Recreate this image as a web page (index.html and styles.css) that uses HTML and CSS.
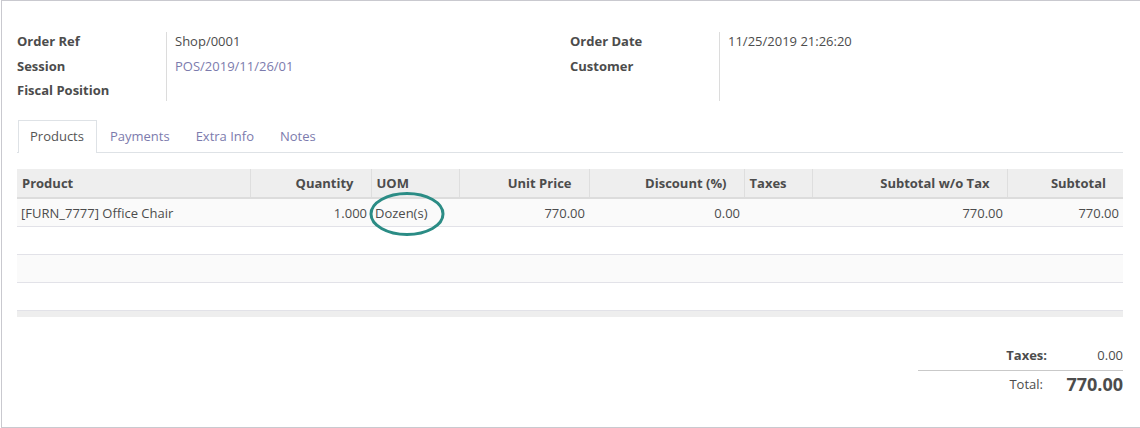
FILE: index.html
```html
<!DOCTYPE html>
<html>
<head>
<meta charset="utf-8">
<link rel="stylesheet" href="styles.css">
</head>
<body>
<div class="sheet">
  <div class="groups">
    <div class="group">
      <div class="lbl">Order Ref</div><div class="val">Shop/0001</div>
      <div class="lbl">Session</div><div class="val"><a class="link">POS/2019/11/26/01</a></div>
      <div class="lbl last">Fiscal Position</div><div class="val last"></div>
    </div>
    <div class="group">
      <div class="lbl">Order Date</div><div class="val">11/25/2019 21:26:20</div>
      <div class="lbl">Customer</div><div class="val"></div>
      <div class="lbl last">&nbsp;</div><div class="val last"></div>
    </div>
  </div>

  <ul class="tabs">
    <li class="tab active">Products</li>
    <li class="tab">Payments</li>
    <li class="tab">Extra Info</li>
    <li class="tab">Notes</li>
  </ul>

  <table class="lines">
    <colgroup>
      <col class="c-product"><col class="c-qty"><col class="c-uom"><col class="c-price"><col class="c-disc"><col class="c-tax"><col class="c-sub"><col class="c-total">
    </colgroup>
    <thead>
      <tr>
        <th class="l">Product</th>
        <th class="r">Quantity</th>
        <th class="l">UOM</th>
        <th class="r">Unit Price</th>
        <th class="r">Discount (%)</th>
        <th class="l">Taxes</th>
        <th class="r">Subtotal w/o Tax</th>
        <th class="r">Subtotal</th>
      </tr>
    </thead>
    <tbody>
      <tr class="odd">
        <td>[FURN_7777] Office Chair</td>
        <td class="r">1.000</td>
        <td>Dozen(s)</td>
        <td class="r">770.00</td>
        <td class="r">0.00</td>
        <td></td>
        <td class="r">770.00</td>
        <td class="r">770.00</td>
      </tr>
      <tr><td colspan="8">&nbsp;</td></tr>
      <tr class="odd"><td colspan="8">&nbsp;</td></tr>
      <tr><td colspan="8">&nbsp;</td></tr>
    </tbody>
    <tfoot>
      <tr><td colspan="8" class="foot"></td></tr>
    </tfoot>
  </table>

  <div class="totals">
    <div class="t-lbl bold">Taxes:</div><div class="t-val">0.00</div>
    <div class="t-lbl total-lbl">Total:</div><div class="t-val total-val">770.00</div>
  </div>

  <svg class="mark" width="84" height="50" viewBox="0 0 84 50">
    <ellipse cx="42" cy="25" rx="36" ry="20.5" fill="none" stroke="#2b8c85" stroke-width="3"/>
  </svg>
</div>
</body>
</html>
```

FILE: styles.css
```css
html, body {
  margin: 0;
  padding: 0;
  background: #fff;
  overflow: hidden;
}

body {
  font-family: "Open Sans", "DejaVu Sans", sans-serif;
  font-size: 13px;
  line-height: 19.5px;
  color: #4c4c4c;
}

.sheet {
  position: relative;
  box-sizing: border-box;
  width: 1139px;
  height: 428px;
  margin-left: 1px;
  border: 1px solid #c9c9cf;
  border-right: none;
  padding: 31px 17px 0 15px;
}

.groups {
  display: grid;
  grid-template-columns: 1fr 1fr;
}

.group {
  display: grid;
  grid-template-columns: 150px 1fr;
}

.lbl {
  box-sizing: border-box;
  font-weight: 700;
  border-right: 1px solid #dcdcdc;
  padding-bottom: 5px;
}

.val {
  padding-left: 8px;
  padding-bottom: 5px;
}

.lbl.last, .val.last {
  padding-bottom: 0;
}

.link {
  color: #7c7bad;
  text-decoration: none;
}

.tabs {
  display: flex;
  list-style: none;
  margin: 19px 0 0 0;
  padding: 0 0 0 1px;
  border-bottom: 1px solid #dee2e6;
}

.tab {
  box-sizing: border-box;
  height: 32px;
  line-height: 30px;
  padding: 0 12px 0 11px;
  margin-right: 1px;
  margin-bottom: -1px;
  color: #7c7bad;
  border: 1px solid transparent;
  border-bottom: none;
}

.tab.active {
  color: #555;
  background: #fff;
  border-color: #dee2e6;
  height: 33px;
}

.lines {
  width: 1106px;
  margin-top: 16px;
  border-collapse: collapse;
  table-layout: fixed;
}

.c-product { width: 233px; }
.c-qty { width: 121px; }
.c-uom { width: 88px; }
.c-price { width: 130px; }
.c-disc { width: 155px; }
.c-tax { width: 68px; }
.c-sub { width: 195px; }
.c-total { width: 116px; }

.lines th {
  background: #eeeeee;
  font-weight: 700;
  line-height: 20px;
  padding: 4px 4px 4px 5px;
  border-bottom: 2px solid #dcdcdc;
  border-left: 1px solid #dedede;
  white-space: nowrap;
}

.lines th:first-child {
  border-left: none;
}

.lines th.l { text-align: left; }
.lines th.r { text-align: right; padding-right: 17px; }

.lines td {
  line-height: 20px;
  padding: 4px 4px 3px 4px;
  border-bottom: 1px solid #e2e2e8;
  white-space: nowrap;
}

.lines td.r { text-align: right; }

.lines tr.odd td {
  background: #fafafa;
}

.lines td.foot {
  background: #eeeeee;
  height: 6px;
  padding: 0;
  line-height: 0;
  border-bottom: none;
}

.totals {
  display: grid;
  grid-template-columns: 1fr 75px;
  width: 205px;
  margin: 29px 0 0 auto;
}

.t-lbl {
  text-align: right;
  padding-right: 1px;
}

.t-lbl.bold {
  font-weight: 700;
  padding-bottom: 5px;
}

.t-val {
  text-align: right;
}

.t-val:nth-child(2) {
  padding-bottom: 5px;
}

.total-lbl, .total-val {
  border-top: 1px solid #c9c9c9;
  line-height: 27px;
}

.total-lbl {
  padding-right: 5px;
}

.total-val {
  font-size: 18px;
  font-weight: 700;
}

.mark {
  position: absolute;
  left: 363px;
  top: 188px;
}
```
